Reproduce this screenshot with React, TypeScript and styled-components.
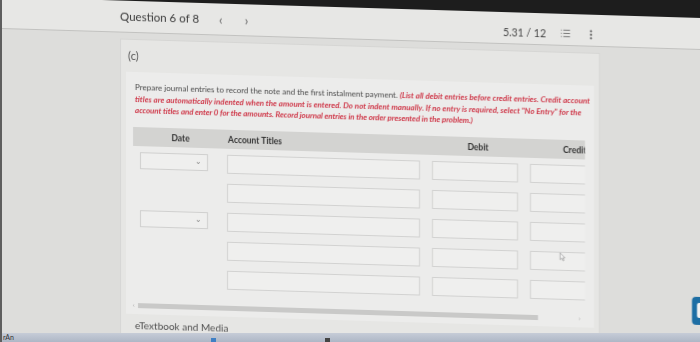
import React from "react"
import styled, { createGlobalStyle } from "styled-components"
import { List, EllipsisVertical } from "lucide-react"

interface JournalRow {
  readonly id: number;
  hasDate: boolean;
}

const rows: JournalRow[] = [
  { id: 1, hasDate: true },
  { id: 2, hasDate: false },
  { id: 3, hasDate: true },
  { id: 4, hasDate: false },
  { id: 5, hasDate: false },
];

export default function App() {
  return (
    <>
      <GlobalStyle />
      <Photo>
        <ScreenClip>
          <Screen>
            <Bezel />
            <Header>
              <HeaderLeft>
                <QuestionTitle>Question 6 of 8</QuestionTitle>
                <NavArrow>‹</NavArrow>
                <NavArrow>›</NavArrow>
              </HeaderLeft>
              <HeaderRight>
                <Score>5.31 / 12</Score>
                <List size={11} strokeWidth={1.6} color="#555" />
                <EllipsisVertical size={12} strokeWidth={2.4} color="#555" />
              </HeaderRight>
            </Header>
            <Body>
              <Card>
                <PartLabel>(c)</PartLabel>
                <Panel>
                  <Instructions>
                    <Line>
                      Prepare journal entries to record the note and the first instalment payment.{" "}
                      <Red>(List all debit entries before credit entries. Credit account</Red>
                    </Line>
                    <Line>
                      <Red>titles are automatically indented when the amount is entered. Do not indent manually. If no entry is required, select "No Entry" for the</Red>
                    </Line>
                    <Line>
                      <Red>account titles and enter 0 for the amounts. Record journal entries in the order presented in the problem.)</Red>
                    </Line>
                  </Instructions>
                  <TableViewport>
                    <HeadRow>
                      <HeadCell $pad={0} $align="center">Date</HeadCell>
                      <HeadCell $pad={0} $align="left">Account Titles</HeadCell>
                      <HeadCell $pad={0} $align="center">Debit</HeadCell>
                      <HeadCell $pad={35} $align="left">Credit</HeadCell>
                    </HeadRow>
                    <RowList>
                      {rows.map((r) => (
                        <EntryRow key={r.id}>
                          <DateCell>{r.hasDate && <DateSelect><Chevron>⌄</Chevron></DateSelect>}</DateCell>
                          <AccountInput />
                          <AmountInput $offset={4} />
                          <AmountInput $offset={2} />
                        </EntryRow>
                      ))}
                    </RowList>
                  </TableViewport>
                  <Scrollbar>
                    <ScrollArrow>‹</ScrollArrow>
                    <ScrollThumb />
                    <ScrollArrow>›</ScrollArrow>
                  </Scrollbar>
                </Panel>
                <Footer>eTextbook and Media</Footer>
              </Card>
            </Body>
            <SideTab />
            <Cursor width="7" height="10" viewBox="0 0 7 10">
              <path d="M1 1 L1 8 L2.8 6.3 L4 9 L5 8.5 L3.9 6 L6 6 Z" fill="#f4f4f4" stroke="#9a9a9a" strokeWidth="0.7" />
            </Cursor>
          </Screen>
        </ScreenClip>
        <Taskbar>
          <TaskLabel>rAn</TaskLabel>
          <TaskMark $color="#3f7fc4" $left={197} />
          <TaskMark $color="#444" $left={109} />
        </Taskbar>
      </Photo>
    </>
  )
}

const GlobalStyle = createGlobalStyle`
  html, body {
    margin: 0;
    padding: 0;
    background: #dcdcda;
  }
  body {
    font-family: Lato, "Open Sans", "Liberation Sans", sans-serif;
  }
`;

const Photo = styled.div`
  width: 700px;
  height: 342px;
  overflow: hidden;
  display: flex;
  flex-direction: column;
  box-sizing: border-box;
  border-left: 2px solid #5e5e5e;
  background: linear-gradient(90deg, #d9d9d7, #e0e0de 50%, #dedddb);
`;

const ScreenClip = styled.div`
  height: 333px;
  flex-shrink: 0;
  overflow: hidden;
  background: #e3e3e1;
`;

// the photo is taken at a slant, so the whole screen is skewed a little
const Screen = styled.div`
  position: relative;
  display: flex;
  flex-direction: column;
  width: 720px;
  transform: skewY(1.72deg);
  transform-origin: 0 0;
  filter: blur(0.3px);
`;

const Bezel = styled.div`
  height: 22px;
  margin-top: -25px;
  background: #1d1d1d;
`;

const Header = styled.div`
  height: 31px;
  display: flex;
  align-items: center;
  justify-content: space-between;
  padding: 0 125px 0 118px;
  background: #e7e7e5;
  border-bottom: 1px solid #c2c2c0;
`;

const HeaderLeft = styled.div`
  display: flex;
  align-items: center;
`;

const QuestionTitle = styled.span`
  font-size: 11.5px;
  color: #3b3b3b;
`;

const NavArrow = styled.span`
  margin-left: 20px;
  font-size: 13px;
  color: #666;
  &:last-child {
    margin-left: 22px;
  }
`;

const HeaderRight = styled.div`
  display: flex;
  align-items: center;
  gap: 14px;
  margin-top: 8px;
`;

const Score = styled.span`
  font-size: 10.5px;
  color: #474747;
`;

const Body = styled.div`
  display: flex;
  padding-left: 118px;
  padding-top: 6px;
  background: #dddddb;
`;

const Card = styled.div`
  width: 480px;
  height: 320px;
  box-sizing: border-box;
  background: #e6e6e4;
  border: 1px solid #d6d6d4;
`;

const PartLabel = styled.div`
  height: 32px;
  line-height: 32px;
  padding-left: 7px;
  font-size: 11px;
  color: #555;
`;

const Panel = styled.div`
  margin: 0 5px;
  padding: 10px 0 6px 7px;
  background: #ececeb;
`;

const Instructions = styled.div`
  padding-left: 2px;
  font-size: 8px;
  line-height: 11.5px;
  color: #4a4a4a;
`;

const Line = styled.div`
  white-space: nowrap;
  &:last-child {
    letter-spacing: -0.1px;
  }
`;

const Red = styled.span`
  color: #cf3a4b;
  font-style: italic;
  font-weight: 700;
`;

const TableViewport = styled.div`
  width: 452px;
  margin-top: 10.5px;
  overflow: hidden;
`;

const columns = "95px 200px 100px 100px";

const HeadRow = styled.div`
  display: grid;
  grid-template-columns: ${columns};
  width: 495px;
  height: 19px;
  align-items: center;
  background: #d3d3d1;
`;

const HeadCell = styled.div<{ $align: "left" | "center"; $pad: number }>`
  font-size: 8.5px;
  font-weight: 700;
  color: #333;
  text-align: ${(p) => p.$align};
  padding-left: ${(p) => p.$pad}px;
`;

const RowList = styled.div`
  display: flex;
  flex-direction: column;
  gap: 10px;
  padding-top: 6px;
`;

const EntryRow = styled.div`
  display: grid;
  grid-template-columns: ${columns};
  width: 495px;
  height: 19px;
  align-items: start;
`;

const DateCell = styled.div`
  padding-left: 7px;
`;

const DateSelect = styled.div`
  width: 68px;
  height: 17px;
  box-sizing: border-box;
  border: 1px solid #d0d0cf;
  background: #efefee;
  display: flex;
  align-items: center;
  justify-content: flex-end;
  padding-right: 5px;
`;

const Chevron = styled.span`
  font-size: 8px;
  line-height: 8px;
  color: #888;
  margin-top: -4px;
`;

const fieldBox = `
  height: 19px;
  box-sizing: border-box;
  border: 1px solid #d2d2d1;
  background: #efefee;
`;

const AccountInput = styled.div`
  ${fieldBox}
  width: 193px;
  margin-left: -1px;
`;

const AmountInput = styled.div<{ $offset: number }>`
  ${fieldBox}
  width: 86px;
  margin-left: ${(p) => p.$offset}px;
`;

const Scrollbar = styled.div`
  width: 452px;
  height: 6px;
  margin-top: 15px;
  display: flex;
  align-items: center;
  gap: 3px;
`;

const ScrollArrow = styled.span`
  font-size: 6px;
  color: #999;
  line-height: 6px;
  &:last-child {
    margin-left: 38px;
  }
`;

const ScrollThumb = styled.div`
  width: 400px;
  height: 5px;
  background: #c9c9c8;
`;

const Footer = styled.div`
  padding: 5px 0 0 14px;
  font-size: 10px;
  line-height: 12px;
  color: #4f4f4f;
`;

const SideTab = styled.div`
  position: absolute;
  left: 690px;
  top: 276px;
  width: 22px;
  height: 28px;
  border-radius: 4px;
  background: #1d6ea4;
  &::after {
    content: "";
    position: absolute;
    left: 5px;
    top: 6px;
    width: 12px;
    height: 15px;
    border-radius: 2px;
    background: #f1f1f1;
  }
`;

const Cursor = styled.svg`
  position: absolute;
  left: 557px;
  top: 235px;
`;

const Taskbar = styled.div`
  height: 9px;
  flex-shrink: 0;
  display: flex;
  align-items: center;
  background: linear-gradient(180deg, #c6ccd7, #aeb7c6);
  overflow: hidden;
`;

const TaskLabel = styled.span`
  font-size: 7px;
  line-height: 9px;
  padding-left: 1px;
  color: #333;
`;

const TaskMark = styled.span<{ $color: string; $left: number }>`
  width: 5px;
  height: 4px;
  margin-left: ${(p) => p.$left}px;
  margin-top: 5px;
  background: ${(p) => p.$color};
`;
